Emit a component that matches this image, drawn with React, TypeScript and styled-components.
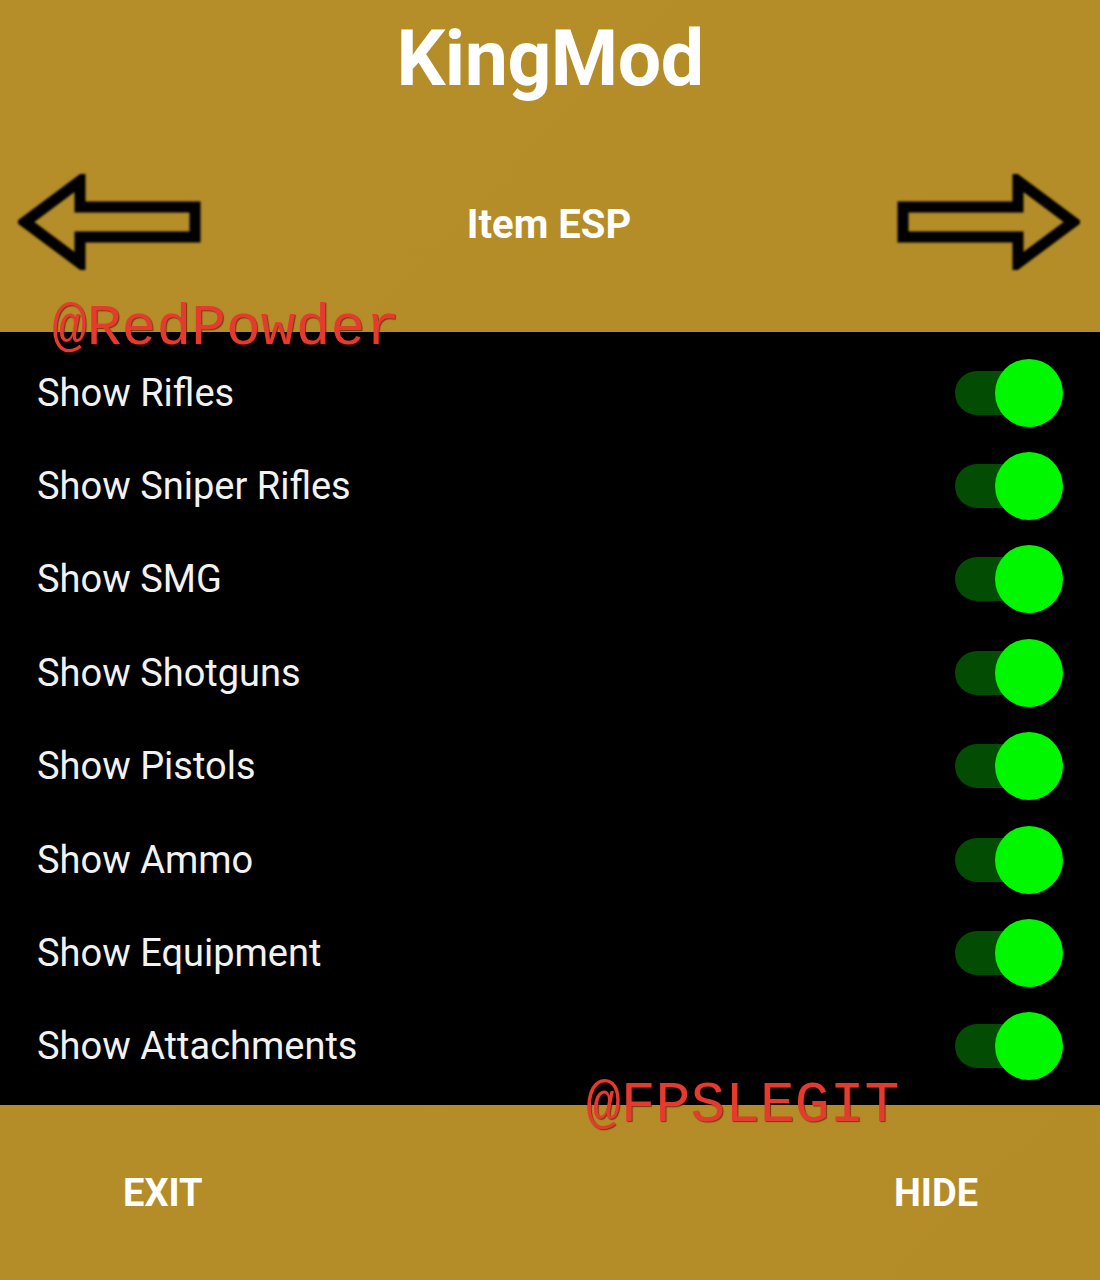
import React from "react";
import styled, { createGlobalStyle } from "styled-components";

const Global = createGlobalStyle`
  html, body { margin: 0; padding: 0; background: #b48d28; }
  body { font-family: Roboto, "Noto Sans", sans-serif; }
`;

const Page = styled.div`
  position: relative;
  width: 1100px;
  height: 1280px;
  background: linear-gradient(135deg, #b58e29 0%, #b38c27 100%);
  display: flex;
  flex-direction: column;
  overflow: hidden;
`;

const TitleBar = styled.div`
  height: 124px;
  display: flex;
  justify-content: center;
  align-items: flex-start;
`;

const Title = styled.h1`
  margin: 0;
  padding-top: 13px;
  font-family: Roboto, sans-serif;
  font-weight: 700;
  font-size: 77px;
  line-height: 92px;
  color: #ffffff;
  letter-spacing: -0.5px;
`;

const NavRow = styled.div`
  height: 208px;
  display: flex;
  align-items: flex-start;
  justify-content: space-between;
  padding: 50px 20px 0 18px;
  box-sizing: border-box;
`;

const ArrowButton = styled.div`
  width: 184px;
  height: 96px;
  display: flex;
  align-items: center;
  justify-content: center;
  filter: blur(1.1px);
`;

const NavTitle = styled.div`
  font-weight: 700;
  font-size: 40px;
  line-height: 96px;
  padding-top: 3px;
  color: #ffffff;
`;

const Panel = styled.div`
  background: #000000;
  padding: 14px 0 12px;
  display: flex;
  flex-direction: column;
`;

const Row = styled.div`
  height: 93.4px;
  display: flex;
  align-items: center;
  justify-content: space-between;
  padding: 0 37px 0 37px;
`;

const Label = styled.span`
  font-size: 38px;
  color: #f2f2f2;
  font-weight: 400;
`;

const Switch = styled.div<{ $on: boolean }>`
  position: relative;
  width: 110px;
  height: 70px;
  display: flex;
  align-items: center;
`;

const Track = styled.div`
  width: 76px;
  height: 44px;
  border-radius: 22px;
  background: #034c03;
  margin-left: 2px;
`;

const Thumb = styled.div`
  position: absolute;
  right: 0;
  top: 1px;
  width: 68px;
  height: 68px;
  border-radius: 50%;
  background: #00f700;
`;

const Footer = styled.div`
  flex: 1;
  display: flex;
  align-items: center;
  justify-content: space-between;
  padding: 0 122px 0 123px;
`;

const FooterButton = styled.span`
  font-weight: 700;
  font-size: 38px;
  color: #ffffff;
`;

const Watermark = styled.span<{ $top: number; $left: number }>`
  position: absolute;
  top: ${(p) => p.$top}px;
  left: ${(p) => p.$left}px;
  font-family: "Courier New", Courier, "Nimbus Mono PS", FreeMono, "Liberation Mono", monospace;
  font-size: 58px;
  line-height: 1;
  color: #e53a2e;
  text-shadow: 1px 1px 1px rgba(80, 0, 0, 0.6);
  white-space: nowrap;
`;

const LeftArrow = () => (
  <svg width="184" height="96" viewBox="0 0 184 96">
    <polygon
      points="7,48 62,7 62,33 177,33 177,63 62,63 62,89"
      fill="none"
      stroke="#000"
      strokeWidth="11"
      strokeLinejoin="miter"
    />
  </svg>
);

const RightArrow = () => (
  <svg width="184" height="96" viewBox="0 0 184 96">
    <polygon
      points="177,48 122,7 122,33 7,33 7,63 122,63 122,89"
      fill="none"
      stroke="#000"
      strokeWidth="11"
      strokeLinejoin="miter"
    />
  </svg>
);

const items = [
  "Show Rifles",
  "Show Sniper Rifles",
  "Show SMG",
  "Show Shotguns",
  "Show Pistols",
  "Show Ammo",
  "Show Equipment",
  "Show Attachments",
];

export default function App() {
  return (
    <>
      <Global />
      <Page>
        <TitleBar>
          <Title>KingMod</Title>
        </TitleBar>
        <NavRow>
          <ArrowButton>
            <LeftArrow />
          </ArrowButton>
          <NavTitle>Item ESP</NavTitle>
          <ArrowButton>
            <RightArrow />
          </ArrowButton>
        </NavRow>
        <Panel>
          {items.map((it) => (
            <Row key={it}>
              <Label>{it}</Label>
              <Switch $on>
                <Track />
                <Thumb />
              </Switch>
            </Row>
          ))}
        </Panel>
        <Footer>
          <FooterButton>EXIT</FooterButton>
          <FooterButton>HIDE</FooterButton>
        </Footer>
        <Watermark $top={300} $left={52}>@RedPowder</Watermark>
        <Watermark $top={1077} $left={586}>@FPSLEGIT</Watermark>
      </Page>
    </>
  );
}
